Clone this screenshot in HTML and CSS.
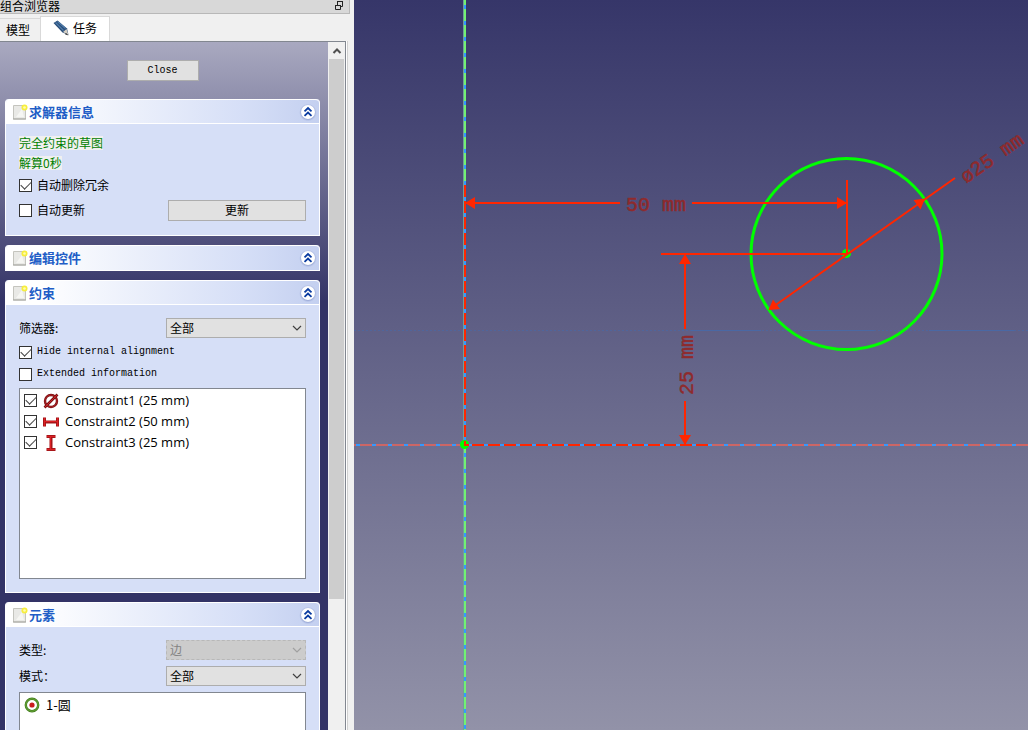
FILE: index.html
```html
<!DOCTYPE html>
<html lang="zh-CN">
<head>
<meta charset="utf-8">
<title>组合浏览器</title>
<link rel="stylesheet" href="styles.css">
</head>
<body>
<svg class="defs" aria-hidden="true">
  <defs>
    <radialGradient id="knob-shade">
      <stop offset="0.7" stop-color="#8c9ccc"/>
      <stop offset="1" stop-color="#b4c2ea" stop-opacity="0"/>
    </radialGradient>
  </defs>
  <symbol id="doc" viewBox="0 0 16 16">
    <path d="M1.500 1.500h12v13.500h-12z" fill="#e9e9e6" stroke="#c4c4be"/>
    <path d="M4 13l6-8 2 8z" fill="#f6f6f3"/>
    <path d="M1 15h13" stroke="#a5a5a0"/>
    <circle cx="12.500" cy="3.500" r="3" fill="#f7ee3c"/>
    <circle cx="12.500" cy="3.500" r="1.300" fill="#fffbb0"/>
  </symbol>
  <symbol id="fold" viewBox="0 0 18 18">
    <circle cx="9" cy="9.500" r="9" fill="url(#knob-shade)"/>
    <circle cx="9" cy="9" r="7" fill="#fff"/>
    <path d="M5.500 8.300L9 5l3.500 3.300M5.500 12.800L9 9.500l3.500 3.300" fill="none" stroke="#0a3ba0" stroke-width="1.800"/>
  </symbol>
  <symbol id="arrow" viewBox="0 0 10 10">
    <path d="M1 3l4 4 4-4" fill="none" stroke="currentColor" stroke-width="1.200"/>
  </symbol>
</svg>
<div class="app">
  <aside class="dock">
    <header class="dock-title">
      <span>组合浏览器</span>
      <button class="float" aria-label="浮动">
        <svg width="10" height="10" viewBox="0 0 10 10"><path d="M3.500 4v-3.500h5v5h-2M1.500 4.500h5v4h-5zM1 4.500h6M3 0.500h6" fill="none" stroke="#222"/></svg>
      </button>
    </header>
    <nav class="tabs">
      <button class="tab">模型</button>
      <button class="tab active">
        <svg width="16" height="16" viewBox="0 0 16 16"><path d="M0.500 3l4-2.500 9.500 8 1.500 6.500-6-2.500z" fill="#2a4d78"/><path d="M2.500 2.500l8 8M4.500 1.500l8 7" stroke="#4f7cab" stroke-width="1.200"/><path d="M10 12l3.500-3 2 6z" fill="#d5cfc4"/><path d="M13 13l2.500 2.500-3.500-1.200z" fill="#222"/></svg>
        任务
      </button>
    </nav>
    <div class="viewport">
      <div class="tasks">
        <div class="close-row"><button class="btn latin close">Close</button></div>

        <section class="group">
          <h2 class="head"><svg class="doc"><use href="#doc"/></svg>求解器信息<button class="fold" aria-label="折叠"><svg width="18" height="18"><use href="#fold"/></svg></button></h2>
          <div class="body solver">
            <p class="status"><span>完全约束的草图</span></p>
            <p class="status"><span>解算0秒</span></p>
            <label class="check tall"><input type="checkbox" checked>自动删除冗余</label>
            <div class="row tall">
              <label class="check"><input type="checkbox">自动更新</label>
              <button class="btn wide">更新</button>
            </div>
          </div>
        </section>

        <section class="group">
          <h2 class="head"><svg class="doc"><use href="#doc"/></svg>编辑控件<button class="fold" aria-label="折叠"><svg width="18" height="18"><use href="#fold"/></svg></button></h2>
        </section>

        <section class="group">
          <h2 class="head"><svg class="doc"><use href="#doc"/></svg>约束<button class="fold" aria-label="折叠"><svg width="18" height="18"><use href="#fold"/></svg></button></h2>
          <div class="body">
            <div class="row filter">
              <label for="filter">筛选器:</label>
              <span class="combo"><select id="filter"><option>全部</option></select><svg><use href="#arrow"/></svg></span>
            </div>
            <label class="check latin"><input type="checkbox" checked>Hide internal alignment</label>
            <label class="check latin"><input type="checkbox">Extended information</label>
            <ul class="list constraints">
              <li><label><input type="checkbox" checked><svg width="16" height="16" viewBox="0 0 16 16"><circle cx="8" cy="8" r="6" fill="none" stroke="#7c1012" stroke-width="2.400"/><path d="M1.500 14.500l13-13" stroke="#7c1012" stroke-width="2.600"/><circle cx="8" cy="8" r="6" fill="none" stroke="#b8262a" stroke-width="0.800"/><path d="M2 14l12-12" stroke="#cf2226"/></svg>Constraint1 (25 mm)</label></li>
              <li><label><input type="checkbox" checked><svg width="16" height="16" viewBox="0 0 16 16"><path d="M1.500 3.500v9M14.500 3.500v9M1 8h14" stroke="#a81518" stroke-width="3"/><path d="M1.500 4v8M14.500 4v8M1 7.500h14" stroke="#dc2024"/></svg>Constraint2 (50 mm)</label></li>
              <li><label><input type="checkbox" checked><svg width="16" height="16" viewBox="0 0 16 16"><path d="M3.500 1.500h9M3.500 14.500h9M8 1v14" stroke="#a81518" stroke-width="3"/><path d="M4 1.500h8M4 14.500h8M7.500 1v14" stroke="#dc2024"/></svg>Constraint3 (25 mm)</label></li>
            </ul>
          </div>
        </section>

        <section class="group">
          <h2 class="head"><svg class="doc"><use href="#doc"/></svg>元素<button class="fold" aria-label="折叠"><svg width="18" height="18"><use href="#fold"/></svg></button></h2>
          <div class="body">
            <div class="row field">
              <label for="type">类型:</label>
              <span class="combo off"><select id="type" disabled><option>边</option></select><svg><use href="#arrow"/></svg></span>
            </div>
            <div class="row field">
              <label for="mode">模式：</label>
              <span class="combo"><select id="mode"><option>全部</option></select><svg><use href="#arrow"/></svg></span>
            </div>
            <ul class="list elements">
              <li><svg width="16" height="16" viewBox="0 0 16 16"><circle cx="8" cy="8" r="6.200" fill="#fff" stroke="#3f7a1c" stroke-width="2.400"/><circle cx="8" cy="8" r="6.200" fill="none" stroke="#78b843" stroke-width="0.800"/><circle cx="8" cy="8" r="2.600" fill="#c91a1e"/></svg>1-圆</li>
            </ul>
          </div>
        </section>
      </div>
      <div class="scrollbar">
        <button aria-label="向上滚动"><svg width="10" height="8" viewBox="0 0 10 8"><path d="M1.500 6L5 2.500 8.500 6" fill="none" stroke="#505050" stroke-width="2"/></svg></button>
        <div class="thumb"></div>
      </div>
    </div>
  </aside>

  <main class="canvas">
    <svg width="100%" height="100%" aria-label="草图">
      <path d="M0 330.500H674" stroke="#4a68a4" stroke-opacity="0.700" stroke-dasharray="2 2"/>
      <path d="M337 330.500h70M450 330.500h70M575 330.500h85" stroke="#4a68a4"/>

      <path d="M0 445H2000" stroke="#3399ff" stroke-width="2"/>
      <path d="M0 445H2000" stroke="#cc6666" stroke-width="2" stroke-dasharray="12 4" stroke-dashoffset="10"/>
      <path d="M110.500 0V2000" stroke="#6f9f98" stroke-width="3"/>
      <path d="M111 0V2000" stroke="#3399ff" stroke-width="2"/>
      <path d="M111 0V2000" stroke="#72f172" stroke-width="2" stroke-dasharray="12 4" stroke-dashoffset="7"/>
      <path d="M111 181V444" stroke="#3399ff" stroke-width="2"/>
      <path d="M111 185V444" stroke="#ff2600" stroke-width="2" stroke-dasharray="12 4"/>
      <path d="M110 445H354" stroke="#ff2600" stroke-width="2" stroke-dasharray="12 4" stroke-dashoffset="8"/>

      <circle cx="492.500" cy="254" r="95.500" fill="none" stroke="#00ff00" stroke-width="3"/>
      <circle cx="492.500" cy="253.500" r="4.500" fill="#00ff00"/>
      <circle cx="110.500" cy="444.500" r="4.500" fill="#00ff00"/>
      <path d="M111 441v4h4" fill="none" stroke="#ff2600" stroke-width="2"/>

      <g stroke="#ff2600" stroke-width="2" fill="none">
        <path d="M112 203H266M338 203H492M493 180V254M307 254H493"/>
        <path d="M331 256V329M331 401V444M416 309L601 178"/>
      </g>
      <g fill="#ff2600">
        <path d="M111 203l10-6v12zM493 203l-10-6v12zM331 254l-6 10h12zM331 445l-6-10h12z"/>
        <path d="M414.500 310l4.500-10.500 7 9.500zM571 198.500l-11.500 1.500 7 9.500z"/>
      </g>
      <g class="dim">
        <text x="272" y="211">50 mm</text>
        <text x="0" y="0" transform="translate(339 395) rotate(-90)">25 mm</text>
        <text x="0" y="0" transform="translate(612 184) rotate(-35)">ø25 mm</text>
      </g>
    </svg>
  </main>
</div>
</body>
</html>
```
FILE: styles.css
```css
* { box-sizing: border-box; }
body {
  margin: 0;
  font: 12px/16px "Noto Sans CJK SC", "Noto Sans", sans-serif;
  color: #000;
}
button, select, input { font: inherit; color: inherit; margin: 0; }
h2, p, ul { margin: 0; padding: 0; }
ul { list-style: none; }
svg { display: block; flex: none; }
.defs { position: absolute; width: 0; height: 0; }

.app { display: flex; height: 100vh; overflow: hidden; }

.dock {
  flex: none;
  width: 354px;
  display: flex;
  flex-direction: column;
  background: #f0f0f0;
}
.dock-title {
  display: flex;
  align-items: center;
  justify-content: space-between;
  height: 14px;
  margin-right: 4px;
  padding-bottom: 2px;
  background: #d8d8d8;
  border: 1px solid #b8b8b8;
  border-width: 0 1px 1px 0;
  line-height: 11px;
}
.float { display: flex; padding: 0 5px 0 0; border: 0; background: none; }

.tabs { display: flex; align-items: flex-end; height: 27px; }
.tab {
  display: flex;
  align-items: center;
  gap: 4px;
  height: 23px;
  padding: 0 10px 0 6px;
  border: 1px solid #d9d9d9;
  border-width: 1px 0 0;
  background: #f0f0f0;
}
.tab.active {
  height: 25px;
  padding: 0 12px 2px;
  border-width: 1px 1px 0;
  background: #fff;
}

.viewport {
  flex: 1;
  min-height: 0;
  display: flex;
  margin-right: 8px;
  border: 1px solid #828790;
  border-width: 1px 1px 0 0;
  box-shadow: 1px 0 #fff, 2px 0 #d0d0d0;
}
.tasks {
  flex: 1;
  display: flex;
  flex-direction: column;
  gap: 9px;
  padding: 18px 8px 0 5px;
  overflow: hidden;
  background: linear-gradient(#a9a9c0, #333366 260px);
}
.close-row { display: flex; justify-content: center; padding-bottom: 9px; }
.btn {
  height: 21px;
  padding: 0;
  border: 1px solid #adadad;
  background: #e1e1e1;
}
.latin { font-family: "Liberation Mono", monospace; font-size: 10px; }
.close { width: 72px; }
.wide { width: 138px; }

.group {
  flex: none;
  border: 1px solid #fff;
  border-top: 0;
  border-radius: 4px 4px 0 0;
  background: #d6dff7;
}
.head {
  display: flex;
  align-items: center;
  height: 25px;
  padding: 0 2px 0 6px;
  border: 1px solid #fff;
  border-width: 1px 0;
  border-radius: 4px 4px 0 0;
  background: linear-gradient(90deg, #fff 10%, #d6dff7 75%, #c4d0f0);
  font-size: 13px;
  line-height: 20px;
  color: #215dc6;
}
.group:nth-child(3) .head { border-bottom: 0; }
.doc { width: 16px; height: 16px; margin-right: 1px; }
.fold { display: flex; margin-left: auto; padding: 0; border: 0; background: none; }

.body { padding: 13px; }
.body.solver { padding: 9px 13px 12px; }
.status { height: 20px; line-height: 20px; color: #008000; }
.status span { display: inline-block; line-height: 14px; background: #f0f0f0; }
.row { display: flex; align-items: center; justify-content: space-between; }
.check { display: flex; align-items: center; gap: 5px; height: 22px; }
.check.tall { height: 24px; }
.row.tall { height: 26px; }
.row.filter { margin-bottom: 3px; }
.row.field { margin-bottom: 6px; }

input[type="checkbox"] {
  appearance: none;
  flex: none;
  width: 13px;
  height: 13px;
  border: 1px solid #333;
  background: #fff;
  display: grid;
  place-items: center;
}
input[type="checkbox"]:checked::before {
  content: "";
  width: 9px;
  height: 5px;
  margin-bottom: 3px;
  border: solid #444;
  border-width: 0 0 1px 1px;
  transform: rotate(-45deg);
}

.combo { display: grid; width: 140px; height: 20px; }
.combo select {
  grid-area: 1 / 1;
  appearance: none;
  padding: 0 3px;
  border: 1px solid #adadad;
  border-radius: 0;
  background: #e1e1e1;
  line-height: 16px;
}
.combo svg {
  grid-area: 1 / 1;
  place-self: center end;
  width: 10px;
  height: 10px;
  margin-right: 4px;
  color: #404040;
  pointer-events: none;
}
.combo.off select { border: 1px dashed #b8b8b8; background: #ccc; color: #838383; opacity: 1; }
.combo.off svg { color: #a0a0a0; }

.list { border: 1px solid #828790; background: #fff; }
.constraints { height: 191px; margin-top: 3px; padding: 1px 4px; font: 13px/21px "Open Sans", sans-serif; }
.constraints label { display: flex; align-items: center; gap: 6px; height: 21px; }
.elements { height: 191px; padding: 1px 4px; font-size: 13px; }
.elements li { display: flex; align-items: center; gap: 6px; height: 21px; }

.scrollbar { flex: none; width: 17px; background: #f0f0f0; }
.scrollbar button {
  display: flex;
  align-items: center;
  justify-content: center;
  width: 100%;
  height: 17px;
  padding: 0;
  border: 0;
  background: #f0f0f0;
}
.thumb { height: calc(100% - 148px); margin: 0 1px; background: #cdcdcd; }

.canvas {
  flex: 1;
  min-width: 0;
  overflow: hidden;
  background: linear-gradient(#363669, #9292a8);
}
.dim { font: 20px "Liberation Mono", monospace; fill: #8f2a2c; stroke: #8f2a2c; stroke-width: 0.5px; }
```
